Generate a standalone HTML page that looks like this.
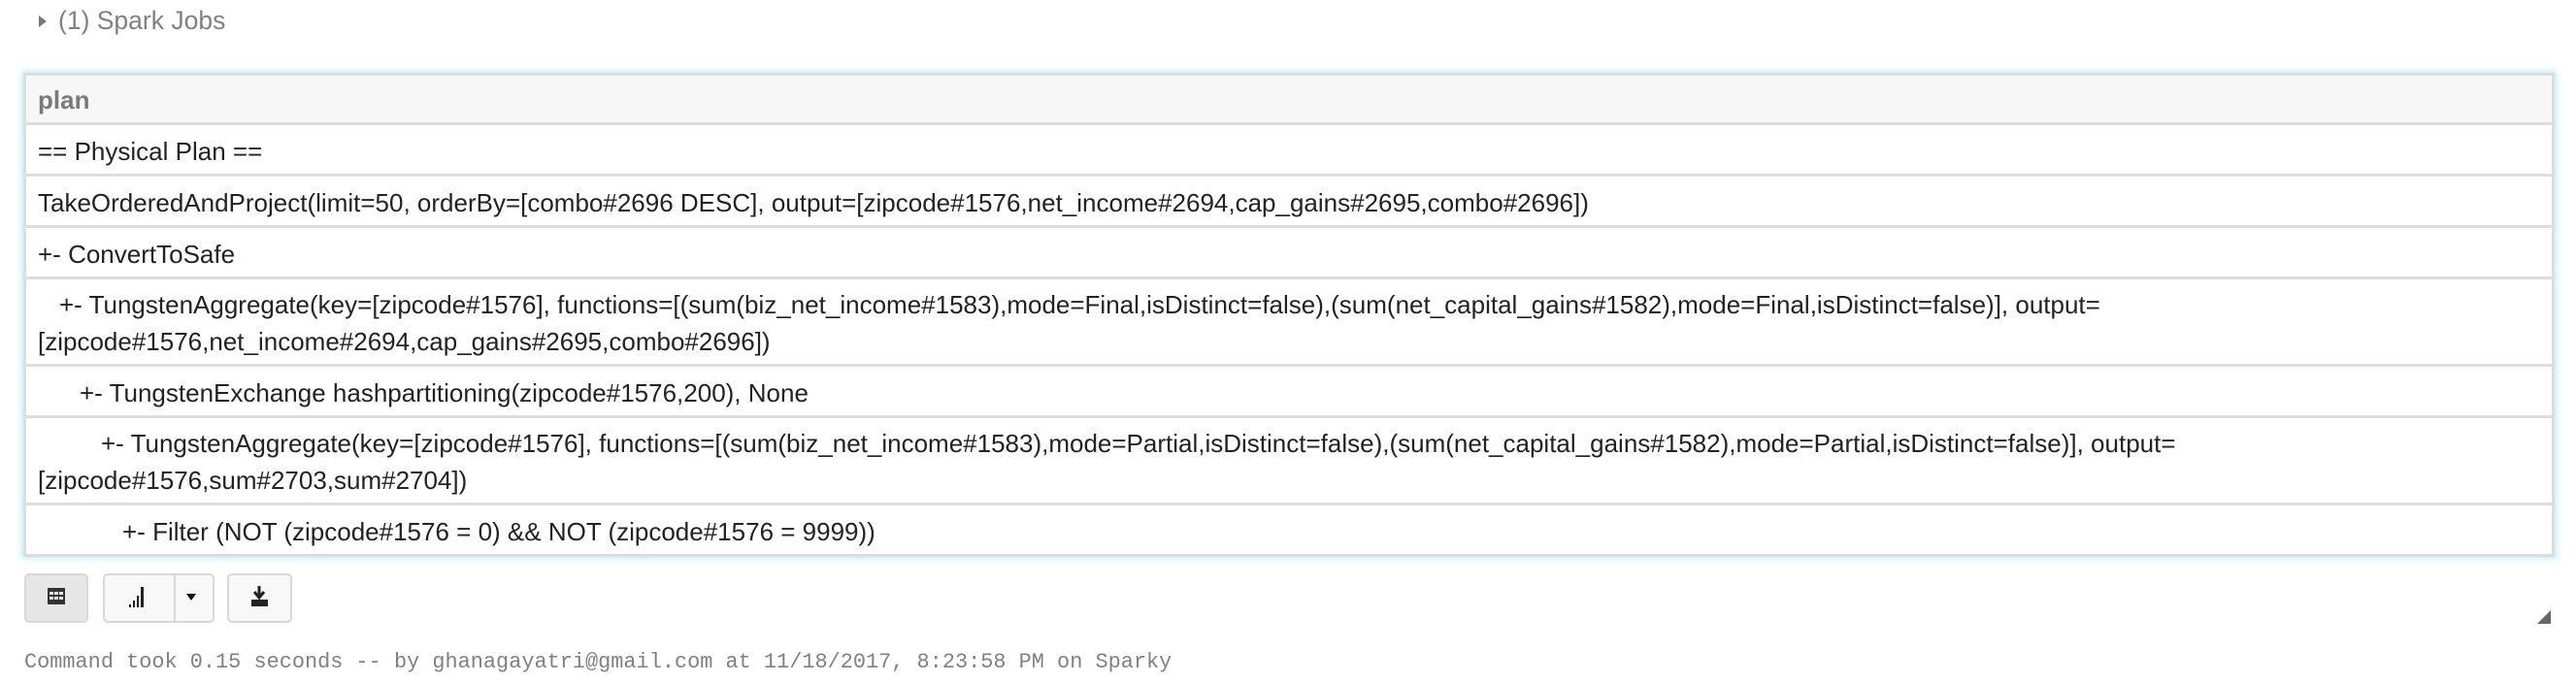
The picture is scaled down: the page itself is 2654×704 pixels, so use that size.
<!DOCTYPE html>
<html><head><meta charset="utf-8"><style>
body{margin:0;width:2654px;height:704px;background:#fff;font-family:"Liberation Sans",Arial,sans-serif;position:relative;overflow:hidden}
.sj{position:absolute;left:40px;top:4px;font-size:26.5px;color:#808080;line-height:34px}
.sj:before{content:"";display:inline-block;border-left:8px solid #777;border-top:6px solid transparent;border-bottom:6px solid transparent;margin-right:12px;vertical-align:2px}
.tbl{position:absolute;left:24px;top:75px;width:2602px;border:3px solid #ddd;box-shadow:0 0 6px 2px #bfeefa;background:#fff}
.r{border-top:3px solid #ddd;font-size:26px;color:#222;line-height:38px;padding:8px 0 4px 12px;white-space:nowrap}
.r:first-child{border-top:0}
.h{background:#f7f7f7;color:#7a7a7a;font-weight:bold;padding:6px 0 4px 12px}
.btn{position:absolute;top:591px;height:51px;border:2px solid #d8d8d8;border-radius:5px;background:#f8f8f8;box-sizing:border-box}
.cmd{position:absolute;left:25px;top:670px;font-family:"Liberation Mono",monospace;font-size:21.9px;color:#808080}
</style></head><body>
<div class="sj">(1) Spark Jobs</div>
<div class="tbl">
<div class="r h">plan</div>
<div class="r">== Physical Plan ==</div>
<div class="r">TakeOrderedAndProject(limit=50, orderBy=[combo#2696 DESC], output=[zipcode#1576,net_income#2694,cap_gains#2695,combo#2696])</div>
<div class="r">+- ConvertToSafe</div>
<div class="r" style="line-height:37.5px"><span style="padding-left:22px">+- TungstenAggregate(key=[zipcode#1576], functions=[(sum(biz_net_income#1583),mode=Final,isDistinct=false),(sum(net_capital_gains#1582),mode=Final,isDistinct=false)], output=</span><br>[zipcode#1576,net_income#2694,cap_gains#2695,combo#2696])</div>
<div class="r"><span style="padding-left:43px">+- TungstenExchange hashpartitioning(zipcode#1576,200), None</span></div>
<div class="r" style="line-height:37.5px"><span style="padding-left:65px">+- TungstenAggregate(key=[zipcode#1576], functions=[(sum(biz_net_income#1583),mode=Partial,isDistinct=false),(sum(net_capital_gains#1582),mode=Partial,isDistinct=false)], output=</span><br>[zipcode#1576,sum#2703,sum#2704])</div>
<div class="r"><span style="padding-left:87px">+- Filter (NOT (zipcode#1576 = 0) &amp;&amp; NOT (zipcode#1576 = 9999))</span></div>
</div>
<div class="btn" style="left:25px;width:66px;background:#e6e6e6"><svg width="62" height="47"><g fill="#333"><rect x="22" y="13" width="18" height="17"/></g><g fill="#e6e6e6"><rect x="24" y="17" width="4" height="3"/><rect x="29" y="17" width="4" height="3"/><rect x="34" y="17" width="4" height="3"/><rect x="24" y="22" width="4" height="3"/><rect x="29" y="22" width="4" height="3"/><rect x="34" y="22" width="4" height="3"/></g></svg></div>
<div class="btn" style="left:106px;width:115px"><svg width="111" height="47"><g fill="#222"><rect x="25" y="30" width="2" height="3"/><rect x="29" y="26" width="2" height="7"/><rect x="33" y="21" width="2" height="12"/><rect x="37" y="12" width="3" height="21"/></g><line x1="72" y1="0" x2="72" y2="47" stroke="#d8d8d8" stroke-width="2"/><path d="M84 19h10l-5 7z" fill="#111"/></svg></div>
<div class="btn" style="left:234px;width:67px"><svg width="63" height="47"><path d="M31 11v10M26 17l5 6 5-6" stroke="#222" stroke-width="3" fill="none"/><rect x="23" y="25" width="17" height="7" fill="#222"/></svg></div>
<svg style="position:absolute;left:2612px;top:627px" width="18" height="18"><path d="M16 2L2 16h14z" fill="#666"/></svg>
<div class="cmd">Command took 0.15 seconds -- by ghanagayatri@gmail.com at 11/18/2017, 8:23:58 PM on Sparky</div>
</body></html>
